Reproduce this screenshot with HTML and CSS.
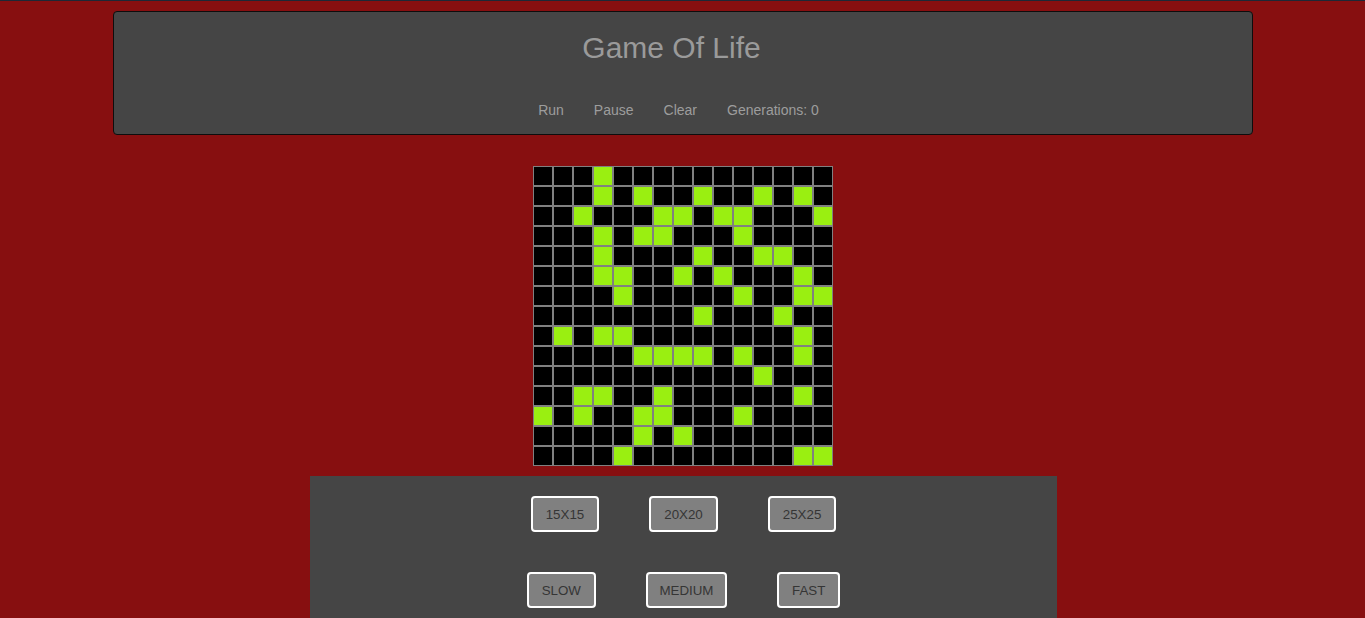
FILE: index.html
```html
<!DOCTYPE html>
<html lang="en">
<head>
<meta charset="utf-8">
<title>Game Of Life</title>
<link rel="stylesheet" href="styles.css">
</head>
<body>
<div class="page">
  <header class="header">
    <h1 class="title">Game Of Life</h1>
    <nav class="nav">
      <a class="nav-item">Run</a>
      <a class="nav-item">Pause</a>
      <a class="nav-item">Clear</a>
      <span class="nav-item">Generations: 0</span>
    </nav>
  </header>

  <div class="board">
    <i></i><i></i><i></i><i class="on"></i><i></i><i></i><i></i><i></i><i></i><i></i><i></i><i></i><i></i><i></i><i></i>
    <i></i><i></i><i></i><i class="on"></i><i></i><i class="on"></i><i></i><i></i><i class="on"></i><i></i><i></i><i class="on"></i><i></i><i class="on"></i><i></i>
    <i></i><i></i><i class="on"></i><i></i><i></i><i></i><i class="on"></i><i class="on"></i><i></i><i class="on"></i><i class="on"></i><i></i><i></i><i></i><i class="on"></i>
    <i></i><i></i><i></i><i class="on"></i><i></i><i class="on"></i><i class="on"></i><i></i><i></i><i></i><i class="on"></i><i></i><i></i><i></i><i></i>
    <i></i><i></i><i></i><i class="on"></i><i></i><i></i><i></i><i></i><i class="on"></i><i></i><i></i><i class="on"></i><i class="on"></i><i></i><i></i>
    <i></i><i></i><i></i><i class="on"></i><i class="on"></i><i></i><i></i><i class="on"></i><i></i><i class="on"></i><i></i><i></i><i></i><i class="on"></i><i></i>
    <i></i><i></i><i></i><i></i><i class="on"></i><i></i><i></i><i></i><i></i><i></i><i class="on"></i><i></i><i></i><i class="on"></i><i class="on"></i>
    <i></i><i></i><i></i><i></i><i></i><i></i><i></i><i></i><i class="on"></i><i></i><i></i><i></i><i class="on"></i><i></i><i></i>
    <i></i><i class="on"></i><i></i><i class="on"></i><i class="on"></i><i></i><i></i><i></i><i></i><i></i><i></i><i></i><i></i><i class="on"></i><i></i>
    <i></i><i></i><i></i><i></i><i></i><i class="on"></i><i class="on"></i><i class="on"></i><i class="on"></i><i></i><i class="on"></i><i></i><i></i><i class="on"></i><i></i>
    <i></i><i></i><i></i><i></i><i></i><i></i><i></i><i></i><i></i><i></i><i></i><i class="on"></i><i></i><i></i><i></i>
    <i></i><i></i><i class="on"></i><i class="on"></i><i></i><i></i><i class="on"></i><i></i><i></i><i></i><i></i><i></i><i></i><i class="on"></i><i></i>
    <i class="on"></i><i></i><i class="on"></i><i></i><i></i><i class="on"></i><i class="on"></i><i></i><i></i><i></i><i class="on"></i><i></i><i></i><i></i><i></i>
    <i></i><i></i><i></i><i></i><i></i><i class="on"></i><i></i><i class="on"></i><i></i><i></i><i></i><i></i><i></i><i></i><i></i>
    <i></i><i></i><i></i><i></i><i class="on"></i><i></i><i></i><i></i><i></i><i></i><i></i><i></i><i></i><i class="on"></i><i class="on"></i>
  </div>

  <section class="controls">
    <div class="btn-row">
      <button class="btn">15X15</button>
      <button class="btn">20X20</button>
      <button class="btn">25X25</button>
    </div>
    <div class="btn-row">
      <button class="btn">SLOW</button>
      <button class="btn btn-narrow">MEDIUM</button>
      <button class="btn">FAST</button>
    </div>
  </section>
</div>
</body>
</html>
```

FILE: styles.css
```css
html, body {
  margin: 0;
  padding: 0;
}

body {
  background: #870f10;
  border-top: 1px solid #1d2836;
  font-family: "Liberation Sans", Arial, sans-serif;
  height: 617px;
  overflow: hidden;
}

.page {
  padding-top: 10px;
}

.header {
  width: 1140px;
  box-sizing: border-box;
  margin: 0 auto;
  background: #454545;
  border: 1px solid #0d0d0d;
  border-radius: 4px;
  padding: 21px 0 14px;
}

.title {
  margin: 0 0 37px;
  padding-right: 22px;
  font-size: 30px;
  line-height: 30px;
  font-weight: normal;
  color: #9a9a9a;
  text-align: center;
}

.nav {
  display: flex;
  justify-content: center;
  gap: 30px;
  font-size: 14px;
  line-height: 20px;
  color: #9d9d9d;
  margin-right: 8px;
}

.board {
  width: 300px;
  margin: 31px auto 10px;
  display: grid;
  grid-template-columns: repeat(15, 20px);
  grid-auto-rows: 20px;
}

.board i {
  display: block;
  box-sizing: border-box;
  border: 1px solid #808080;
  background: #000;
}

.board i.on {
  background: #9aef11;
}

.controls {
  width: 747px;
  margin: 0 0 0 calc(50% - 372.5px);
  background: #454545;
  padding: 20px 0 30px;
  display: flex;
  flex-direction: column;
  gap: 40px;
}

.btn-row {
  display: flex;
  justify-content: center;
  gap: 50px;
}

.btn {
  height: 36px;
  padding: 0 13px;
  background: #808080;
  border: 2px solid #ffffff;
  border-radius: 4px;
  color: #353535;
  font-family: "Liberation Sans", Arial, sans-serif;
  font-size: 13.33px;
}

.btn-narrow {
  padding: 0 11.5px;
}
```
